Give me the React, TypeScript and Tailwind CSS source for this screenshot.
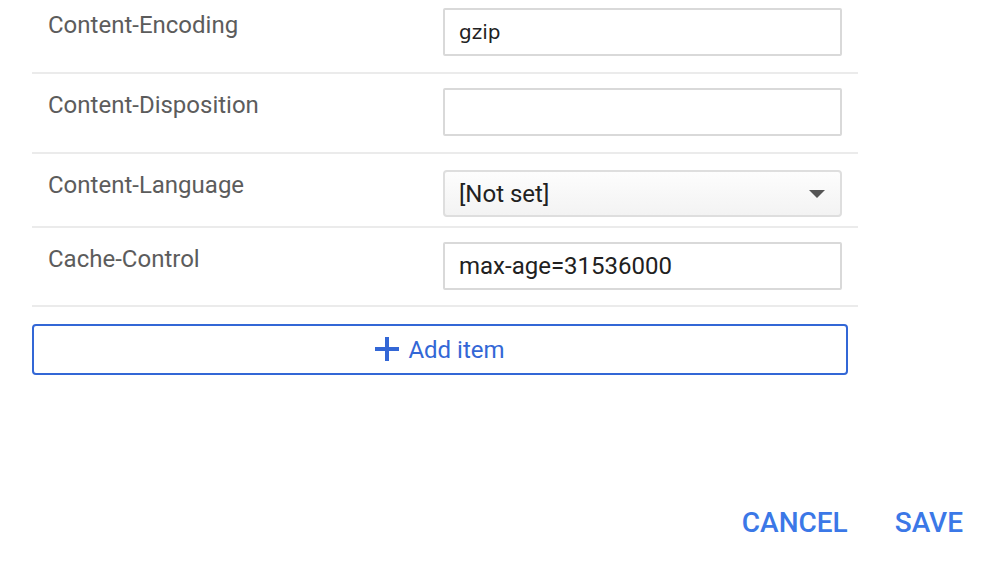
import { ReactNode } from 'react'

type RowProps = {
  label: string
  children: ReactNode
  className?: string
  labelClassName?: string
}

function Row({ label, children, className = 'pt-[14px] pb-[16px]', labelClassName = 'pt-[5px]' }: RowProps) {
  return (
    <div className={`flex border-b-2 border-[#ebebeb] ${className}`}>
      <div className={`w-[411px] pl-4 text-[24px] leading-6 text-[#5c5c5c] ${labelClassName}`}>{label}</div>
      <div className="w-[399px]">{children}</div>
    </div>
  )
}

function TextBox({ value = '', className = '' }: { value?: string; className?: string }) {
  return (
    <div
      className={`h-[48px] flex items-center border-2 border-[#d9d9d9] rounded-[2px] bg-white px-[14px] text-[#212121] ${className}`}
    >
      {value}
    </div>
  )
}

export default function App() {
  return (
    <div className="w-[996px] h-[564px] bg-white overflow-hidden font-['Roboto',sans-serif]">
      <div className="pl-8 -mt-[6px]">
        <div className="w-[826px]">
          <Row label="Content-Encoding">
            <TextBox value="gzip" className="font-['DejaVu_Sans',sans-serif] text-[20px]" />
          </Row>
          <Row label="Content-Disposition">
            <TextBox />
          </Row>
          <Row label="Content-Language" className="pt-[16px] pb-[9px]" labelClassName="pt-[3px]">
            <div className="h-[47px] flex items-center justify-between border-2 border-[#dedede] rounded-[4px] bg-gradient-to-b from-[#fdfdfd] to-[#f3f3f3] pl-[14px] pr-[15px] text-[24px] text-[#212121]">
              <span>[Not set]</span>
              <span className="w-0 h-0 border-l-[8px] border-r-[8px] border-t-[8px] border-l-transparent border-r-transparent border-t-[#555555]" />
            </div>
          </Row>
          <Row label="Cache-Control" className="pt-[14px] pb-[15px]">
            <TextBox value="max-age=31536000" className="text-[24px]" />
          </Row>
        </div>
        <button className="mt-[17px] w-[816px] h-[51px] flex items-center justify-center gap-[9px] border-2 border-[#3367d6] rounded-[4px] text-[#3367d6] text-[24px]">
          <svg width="24" height="24" viewBox="0 0 24 24" className="-mt-[2px]">
            <path d="M12 0v24M0 12h24" stroke="#3367d6" strokeWidth="4" fill="none" />
          </svg>
          <span>Add item</span>
        </button>
      </div>
      <div className="mt-[124px] h-[48px] flex items-center justify-end gap-[47px] pr-[33px] text-[28px] font-medium text-[#3b78e7]">
        <button>CANCEL</button>
        <button>SAVE</button>
      </div>
    </div>
  )
}
